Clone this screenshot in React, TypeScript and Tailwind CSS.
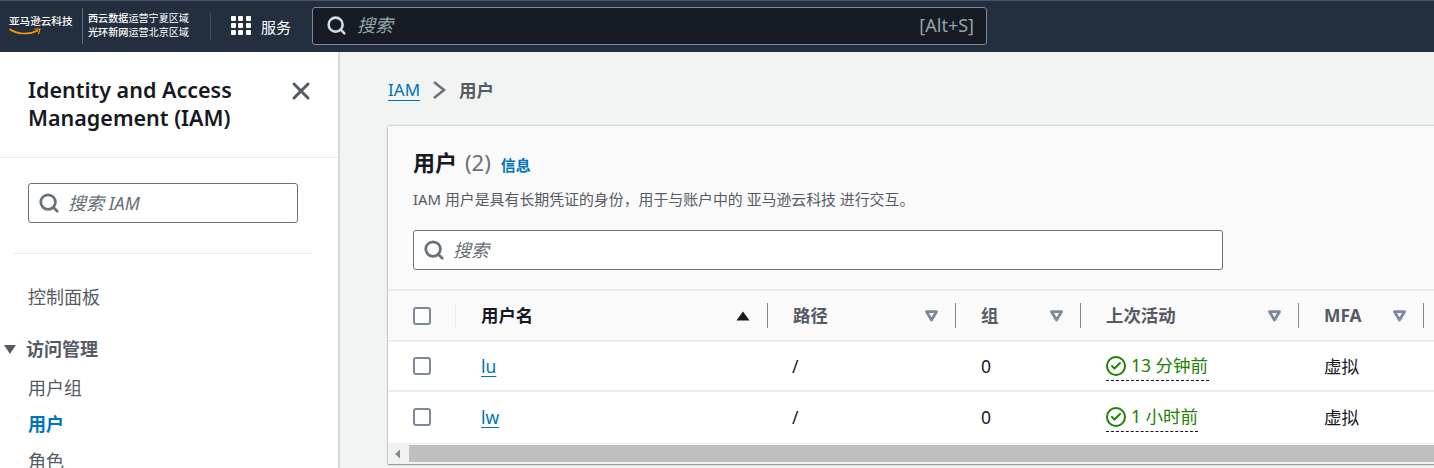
import { Check, Search, X } from "lucide-react";

const font = { fontFamily: '"Noto Sans", "Noto Sans CJK SC", sans-serif' };

function Caret({ up, color }: { up?: boolean; color: string }) {
  if (up) {
    return (
      <svg width="14" height="10" viewBox="0 0 14 10">
        <path d="M7 0.5 L13.5 9.5 H0.5 Z" fill={color} />
      </svg>
    );
  }
  return (
    <svg width="13" height="12" viewBox="0 0 13 12">
      <path d="M1.5 1.7 H11.5 L6.5 10 Z" fill="none" stroke={color} strokeWidth="2.8" strokeLinejoin="round" />
    </svg>
  );
}

function Box() {
  return <span className="block w-[18px] h-[18px] rounded-[3px] border-2 border-[#7d8998] bg-white" />;
}

function HeadCell({ label, width, sorted, sep = true }: { label: string; width: string; sorted?: boolean; sep?: boolean }) {
  return (
    <div className={`${width} shrink-0 h-full flex items-center relative pl-[25px] pr-[18px] justify-between`}>
      <span className={`text-[17.4px] font-bold ${sorted ? "text-[#16191f]" : "text-[#545b64]"}`}>{label}</span>
      {sorted ? <Caret up color="#16191f" /> : <Caret color="#7d8998" />}
      {sep && <span className="absolute right-0 top-[12px] bottom-[12px] w-px bg-[#7d8998]" />}
    </div>
  );
}

function Row({ name, time, wTime, border }: { name: string; time: string; wTime: string; border?: boolean }) {
  return (
    <div className={`flex items-center h-[50px] bg-white text-[17.5px] text-[#16191f] ${border ? "border-b-2 border-[#eaeded]" : ""}`}>
      <div className="w-[67px] shrink-0 pl-[25px]">
        <Box />
      </div>
      <div className="w-[312px] shrink-0 pl-[26px]">
        <span className="text-[#0073bb] underline underline-offset-[3px]">{name}</span>
      </div>
      <div className="w-[188px] shrink-0 pl-[25px]">/</div>
      <div className="w-[125px] shrink-0 pl-[26px]">0</div>
      <div className="w-[218px] shrink-0 pl-[26px]">
        <span className="inline-flex items-center gap-[5px] h-[29px] border-b border-dashed border-[#16191f] text-[#1d8102]" style={{ width: wTime }}>
          <span className="w-[20px] h-[20px] rounded-full border-[2.5px] border-[#1d8102] flex items-center justify-center shrink-0">
            <Check size={12} strokeWidth={4} />
          </span>
          <span className="whitespace-nowrap">{time}</span>
        </span>
      </div>
      <div className="pl-[26px]">虚拟</div>
    </div>
  );
}

export default function App() {
  return (
    <div className="w-[1434px] h-[468px] overflow-hidden flex flex-col bg-[#f2f3f3]" style={font}>
      {/* Top bar */}
      <header className="h-[52px] shrink-0 bg-[#232f3e] border-t border-[#4b5563] pb-[2px] flex items-center text-white">
        <div className="w-[82px] shrink-0 pl-[9px] flex flex-col">
          <span className="text-[10.6px] leading-[13px] font-medium whitespace-nowrap">亚马逊云科技</span>
          <svg width="32" height="9" viewBox="0 0 32 9">
            <path d="M0.5 1 C8 6.5 20 7 29 2.5" fill="none" stroke="#ff9900" strokeWidth="1.6" />
            <path d="M25.5 1 L31 1 L29.5 6" fill="none" stroke="#ff9900" strokeWidth="1.2" />
          </svg>
        </div>
        <div className="w-px h-[36px] bg-[#5f6b7a]" />
        <div className="w-[127px] shrink-0 pl-[5px] mb-[2px] text-[10.1px] leading-[14px] whitespace-nowrap">
          <div><span className="font-medium">西云数据</span>运营宁夏区域</div>
          <div><span className="font-medium">光环新网</span>运营北京区域</div>
        </div>
        <div className="w-px h-[28px] bg-[#414d5c]" />
        <div className="ml-[20px] grid grid-cols-3 gap-[2px] w-[20px] shrink-0">
          {Array.from({ length: 9 }).map((_, i) => (
            <span key={i} className="w-[5px] h-[5px] bg-white rounded-[1px]" />
          ))}
        </div>
        <span className="ml-[10px] w-[51px] shrink-0 text-[15px] leading-[26px] mt-[2px]">服务</span>
        <div className="w-[675px] h-[38px] shrink-0 rounded-[3px] border border-[#7d8998] bg-[#161b25] flex items-center pl-[13px] pr-[12px]">
          <Search size={21} strokeWidth={2.9} className="text-[#d5dbdb]" />
          <span className="ml-[10px] text-[18px] italic text-[#95a5a6]">搜索</span>
          <span className="ml-auto text-[18px] text-[#95a5a6]">[Alt+S]</span>
        </div>
      </header>

      <div className="flex flex-1 min-h-0">
        {/* Side nav */}
        <aside className="w-[340px] shrink-0 bg-white border-r-2 border-[#d5dbdb] overflow-hidden">
          <div className="h-[106px] border-b border-[#eaeded] pl-[28px] pr-[23px] pt-[24px] flex justify-between items-start">
            <h2 className="text-[21.5px] leading-[28px] font-semibold text-[#16191f]">
              Identity and Access
              <br />
              Management (IAM)
            </h2>
            <X size={28} strokeWidth={2.6} className="text-[#545b64] mt-[1px]" />
          </div>
          <div className="px-[28px] pt-[25px] pb-[30px]">
            <div className="w-[270px] h-[40px] rounded-[3px] border border-[#687078] flex items-center pl-[9px]">
              <Search size={22} strokeWidth={3} className="text-[#687078]" />
              <span className="ml-[8px] text-[18px] italic text-[#687078]">搜索 IAM</span>
            </div>
          </div>
          <div className="mx-[13px] w-[300px] border-t border-[#eaeded]" />
          <div className="pt-[29px] text-[18px] leading-[28px] text-[#545b64]">
            <div className="pl-[28px]">控制面板</div>
            <div className="mt-[24px] flex items-center font-bold">
              <svg width="14" height="11" viewBox="0 0 14 11" className="ml-[3px] mr-[9px]">
                <path d="M1 1 H13 L7 10 Z" fill="#545b64" />
              </svg>
              访问管理
            </div>
            <div className="pl-[28px] mt-[11px]">用户组</div>
            <div className="pl-[28px] mt-[8px] font-bold text-[#0073bb]">用户</div>
            <div className="pl-[28px] mt-[9px]">角色</div>
          </div>
        </aside>

        {/* Main */}
        <main className="flex-1 min-w-0 pl-[48px] overflow-hidden">
          <div className="h-[74px] flex items-center pt-[2px] text-[17px]">
            <span className="text-[#0073bb] underline underline-offset-[4px]">IAM</span>
            <svg width="14" height="20" viewBox="0 0 14 20" className="ml-[12px] mr-[13px]">
              <path d="M2 2 L12 10 L2 18" fill="none" stroke="#687078" strokeWidth="2.6" />
            </svg>
            <span className="font-bold text-[#545b64] text-[17.5px]">用户</span>
          </div>
          <section className="w-[1100px] h-[338px] bg-[#fafafa] shadow-[0_0_2px_rgba(0,28,36,0.4),0_1px_1px_rgba(0,28,36,0.3)] flex flex-col">
            <div className="h-[165px] shrink-0 px-[25px] pt-[20px] border-b-2 border-[#eaeded]">
              <div className="flex items-baseline h-[34px]">
                <h1 className="text-[22px] font-bold text-[#16191f]">用户</h1>
                <span className="ml-[8px] text-[22px] text-[#687078]">(2)</span>
                <span className="ml-[10px] text-[15px] font-bold text-[#0073bb]">信息</span>
              </div>
              <p className="mt-[9px] text-[14.9px] leading-[20px] text-[#545b64] whitespace-nowrap">
                IAM 用户是具有长期凭证的身份，用于与账户中的 亚马逊云科技 进行交互。
              </p>
              <div className="mt-[21px] w-[810px] h-[40px] bg-white rounded-[3px] border border-[#687078] flex items-center pl-[9px]">
                <Search size={22} strokeWidth={3} className="text-[#687078]" />
                <span className="ml-[8px] text-[18px] italic text-[#687078]">搜索</span>
              </div>
            </div>
            <div className="flex items-center h-[51px] shrink-0 border-b-2 border-[#eaeded]">
              <div className="w-[68px] shrink-0 h-full flex items-center pl-[25px] relative">
                <Box />
                <span className="absolute right-0 top-[12px] bottom-[12px] w-px bg-[#eaeded]" />
              </div>
              <HeadCell label="用户名" width="w-[312px]" sorted />
              <HeadCell label="路径" width="w-[188px]" />
              <HeadCell label="组" width="w-[125px]" />
              <HeadCell label="上次活动" width="w-[218px]" />
              <HeadCell label="MFA" width="w-[125px]" />
            </div>
            <Row name="lu" time="13 分钟前" wTime="103px" border />
            <Row name="lw" time="1 小时前" wTime="92px" />
            <div className="flex-1 min-h-0 mt-[1px] bg-[#f1f1f1] flex items-center">
              <svg width="21" height="20" viewBox="0 0 21 20" className="shrink-0">
                <path d="M7 10 L12 5.5 V14.5 Z" fill="#7f8c8d" />
              </svg>
              <div className="flex-1 h-[17px] bg-[#bfbfbf]" />
            </div>
          </section>
        </main>
      </div>
    </div>
  );
}
